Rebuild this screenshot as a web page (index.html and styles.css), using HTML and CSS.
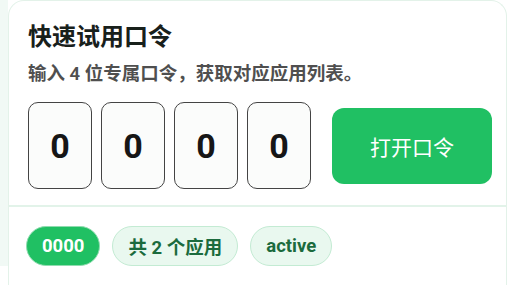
FILE: index.html
```html
<!DOCTYPE html>
<html lang="zh-CN">

<head>
  <meta charset="UTF-8">
  <meta name="viewport" content="width=device-width, initial-scale=1.0">
  <title>快速试用口令</title>
  <link rel="stylesheet" href="styles.css">
</head>

<body>
  <div class="page">
    <div class="rail"></div>

    <div class="card">
      <div class="head">
        <h2 class="title">快速试用口令</h2>
        <p class="desc">输入 4 位专属口令，获取对应应用列表。</p>

        <div class="code-row">
          <div class="codes">
            <div class="code-box">0</div>
            <div class="code-box">0</div>
            <div class="code-box">0</div>
            <div class="code-box">0</div>
          </div>
          <button class="open-btn">打开口令</button>
        </div>
      </div>

      <div class="chips">
        <span class="chip chip-main">0000</span>
        <span class="chip">共 2 个应用</span>
        <span class="chip">active</span>
      </div>
    </div>
  </div>
</body>

</html>
```

FILE: styles.css
```css
* {
  box-sizing: border-box;
}

body {
  margin: 0;
  background: #fff;
  font-family: Roboto, "Noto Sans CJK SC", sans-serif;
  overflow: hidden;
}

.page {
  display: flex;
  align-items: flex-start;
  height: 285px;
}

.rail {
  width: 8px;
  height: 266px;
  background: #f1f9f5;
}

.card {
  flex: 1;
  margin-right: 3px;
  height: 285px;
  background: #fff;
  border: 1px solid #e3f2e9;
  border-bottom: none;
  border-radius: 16px 16px 0 0;
}

.head {
  padding: 20px 14px 16px 19px;
  border-bottom: 2px solid #e2f3e9;
}

.title {
  margin: 0;
  font-size: 24px;
  line-height: 32px;
  font-weight: 700;
  color: #18201b;
}

.desc {
  margin: 8px 0 0;
  font-size: 18.5px;
  line-height: 26px;
  font-weight: 600;
  color: #4f4f4f;
}

.code-row {
  display: flex;
  align-items: center;
  justify-content: space-between;
  margin-top: 15px;
}

.codes {
  display: flex;
  gap: 9px;
}

.code-box {
  width: 64px;
  height: 87px;
  display: flex;
  align-items: center;
  justify-content: center;
  border: 1.5px solid #444;
  border-radius: 10px;
  background: #fbfcfb;
  font-size: 34px;
  font-weight: 700;
  color: #161616;
}

.open-btn {
  width: 160px;
  height: 76px;
  border: none;
  border-radius: 12px;
  background: #20c063;
  color: #fff;
  font-family: Roboto, "Noto Sans CJK SC", sans-serif;
  font-size: 21px;
  font-weight: 400;
}

.chips {
  display: flex;
  gap: 12px;
  padding: 19px 0 0 17px;
}

.chip {
  height: 40px;
  display: inline-flex;
  align-items: center;
  padding: 0 15px;
  border: 1.5px solid #c3ebd3;
  border-radius: 20px;
  background: #e9f8ef;
  color: #1b6b3d;
  font-size: 18.5px;
  font-weight: 700;
}

.chip-main {
  background: #20c063;
  border-color: #8fdcaf;
  color: #fff;
}
```
